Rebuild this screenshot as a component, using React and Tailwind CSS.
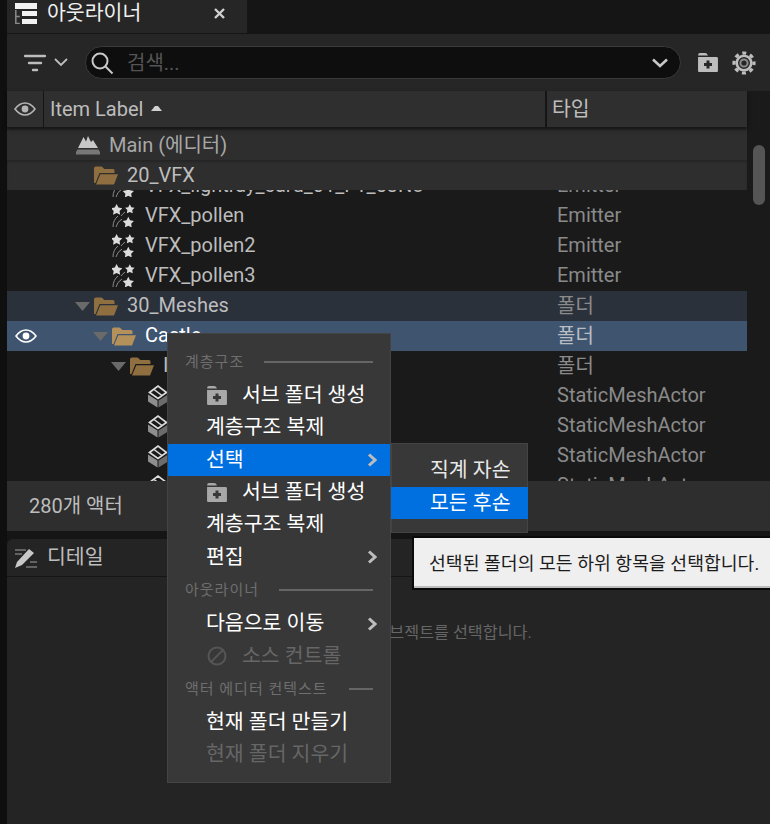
import React from "react";

const FONT = { fontFamily: '"Roboto","Noto Sans CJK KR",sans-serif' };

function starPath(cx, cy, r, inner) {
  let d = "";
  for (let i = 0; i < 10; i++) {
    const rad = i % 2 === 0 ? r : inner;
    const a = -Math.PI / 2 + (i * Math.PI) / 5;
    d += `${i === 0 ? "M" : "L"}${(cx + rad * Math.cos(a)).toFixed(2)} ${(cy + rad * Math.sin(a)).toFixed(2)}`;
  }
  return d + "Z";
}

function Eye({ color = "#b4b4b4" }) {
  return (
    <svg width="22" height="14" viewBox="0 0 22 14" fill="none">
      <path d="M1 7C4 3 7 1 11 1s7 2 10 6c-3 4-6 6-10 6S4 11 1 7Z" stroke={color} strokeWidth="1.6" />
      <circle cx="11" cy="7" r="3.4" fill={color} />
    </svg>
  );
}

function Folder({ color = "#8f6e40" }) {
  return (
    <svg width="24" height="19" viewBox="0 0 24 19" className="shrink-0">
      <path d="M0 17V2.2Q0 .5 2 .5h5q1 0 1.8.9L10.3 3H19q1.5 0 1.5 1.5V7H5.500L1.500 17Z" fill={color} />
      <path d="M2 18.5 6.300 8.200H24L20 18.500Z" fill={color} />
    </svg>
  );
}

function Arrow() {
  return (
    <svg width="15" height="9" viewBox="0 0 15 9" className="shrink-0">
      <path d="M0 0h15L7.500 9Z" fill="#6a6a6a" />
    </svg>
  );
}

function Stars() {
  return (
    <svg width="24" height="24" viewBox="0 0 24 24" className="shrink-0">
      <g fill="#dcdcdc">
        <path d={starPath(4.6, 7, 6, 3.1)} />
        <path d={starPath(17.8, 6.3, 5, 2.6)} />
        <path d={starPath(16.3, 19.7, 5.9, 3)} />
      </g>
      <g stroke="#8a8a8a" fill="none" strokeWidth="1">
        <path d="M1 24Q1 17 6 13" />
        <path d="M4 24Q5 19 10 16" />
        <path d="M9 13Q11 10.500 13 9" />
      </g>
    </svg>
  );
}

function Mesh() {
  return (
    <svg width="20" height="24" viewBox="0 0 20 24" className="shrink-0">
      <path d="M0 10.500v7l9.500 6v-7Z" fill="#8e8e8e" />
      <path d="M20 10.500v7l-9.500 6v-7Z" fill="#6c6c6c" />
      <path d="M1.500 8.500 10 2l8.500 6.500L10 14.500Z" fill="none" stroke="#dcdcdc" strokeWidth="1.700" />
      <path d="M6 5.500l8 6" stroke="#dcdcdc" strokeWidth="1.500" fill="none" />
    </svg>
  );
}

function FolderPlus({ color = "#bdbdbd", bg = "#262626", w = 22 }) {
  return (
    <svg width={w} height={w * 0.95} viewBox="0 0 22 21" className="shrink-0">
      <path d="M1 3.500Q1 1 3 1h5q2 0 3 2.500Z" fill={color} />
      <path d="M1 5h18.500Q21 5 21 6.500V19q0 1-1 1H2q-1 0-1-1Z" fill={color} />
      <path d="M9.500 8.500h3V11H15v3h-2.500v2.500h-3V14H7v-3h2.500Z" fill={bg} />
    </svg>
  );
}

function Gear() {
  return (
    <svg width="24" height="24" viewBox="0 0 24 24" fill="none">
      <circle cx="12" cy="12" r="10" stroke="#bdbdbd" strokeWidth="3.200" strokeDasharray="4 3.850" strokeDashoffset="2" />
      <circle cx="12" cy="12" r="7.300" stroke="#bdbdbd" strokeWidth="2.600" />
      <circle cx="12" cy="12" r="3.600" stroke="#8c8c8c" strokeWidth="2" />
    </svg>
  );
}

function Chevron({ color = "#bdbdbd" }) {
  return (
    <svg width="10" height="14" viewBox="0 0 10 14" fill="none">
      <path d="M2 1.500 8 7l-6 5.500" stroke={color} strokeWidth="3" />
    </svg>
  );
}

function Row({ indent, icon, label, type, className = "", textClass = "text-[#bdbdbd]", typeClass = "", eye, arrow }) {
  return (
    <div className={`relative flex h-[30px] shrink-0 items-center ${className}`}>
      <div className="flex w-[37px] shrink-0 justify-center">{eye && <Eye color="#ffffff" />}</div>
      <div className="flex w-[503px] shrink-0 items-center" style={{ paddingLeft: indent }}>
        {arrow && <span className="mr-[4px] flex"><Arrow /></span>}
        {icon}
        <span className={`ml-[9px] whitespace-nowrap text-[20px] ${textClass}`}>{label}</span>
      </div>
      <span className={`ml-[10px] whitespace-nowrap text-[20px] text-[#8a8a8a] ${typeClass}`}>{type}</span>
    </div>
  );
}

function MenuHeader({ label, line }) {
  return (
    <div className="flex h-[34px] items-center pl-[17px] pr-[17px]">
      <span className="whitespace-nowrap text-[15px] tracking-[1px] text-[#6e6e6e]">{label}</span>
      <div className="ml-auto h-[2px] bg-[#666666]" style={{ width: line }} />
    </div>
  );
}

function MenuItem({ label, icon, chevron, active, disabled }) {
  return (
    <div className={`flex h-[32.5px] items-center pl-[38px] pr-[13px] ${active ? "bg-[#0070e0]" : ""}`}>
      {icon && <span className="mr-[14px] flex w-[22px] justify-center">{icon}</span>}
      <span className={`whitespace-nowrap text-[20.5px] ${disabled ? "text-[#666666]" : "text-white"}`}>{label}</span>
      {chevron && <span className="ml-auto flex"><Chevron /></span>}
    </div>
  );
}

export default function App() {
  return (
    <div className="relative flex h-[824px] w-[770px] overflow-hidden bg-[#151515]" style={FONT}>
      <div className="w-[7px] shrink-0 bg-[#0f0f0f]" />
      <div className="flex min-w-0 flex-1 flex-col">
        {/* tab strip */}
        <div className="flex h-[34px] shrink-0 bg-[#151515]">
          <div className="flex h-[33px] w-[240px] items-center bg-[#262626] pb-[6px]">
            <svg width="22" height="21" viewBox="0 0 22 21" className="ml-[8px]">
              <path d="M0 0h22v6H0Z" fill="#f2f2f2" />
              <path d="M7 8h15v5H7ZM7 16h15v5H7Z" fill="#f2f2f2" />
              <path d="M.8 7v13.500h4M.8 13.500h4" stroke="#8a8a8a" strokeWidth="1.500" fill="none" />
            </svg>
            <span className="ml-[10px] text-[20.5px] text-[#f0f0f0]">아웃라이너</span>
            <svg width="11" height="11" viewBox="0 0 11 11" className="ml-auto mr-[22px]">
              <path d="M1 1l9 9M10 1l-9 9" stroke="#d0d0d0" strokeWidth="2.400" />
            </svg>
          </div>
        </div>
        {/* toolbar */}
        <div className="flex h-[57px] shrink-0 items-center bg-[#262626]">
          <svg width="22" height="18" viewBox="0 0 22 18" className="ml-[17px]">
            <path d="M1 2h20M5 9h12M9 16h4" stroke="#bdbdbd" strokeWidth="2.400" strokeLinecap="round" />
          </svg>
          <svg width="14" height="9" viewBox="0 0 14 9" fill="none" className="ml-[8px]">
            <path d="M1 1l6 6 6-6" stroke="#bdbdbd" strokeWidth="1.800" />
          </svg>
          <div className="ml-[17px] flex h-[33px] w-[596px] items-center rounded-full border border-[#3a3a3a] bg-[#0e0e0e]">
            <svg width="24" height="24" viewBox="0 0 24 24" fill="none" className="ml-[4px]">
              <circle cx="10" cy="10" r="7.500" stroke="#c8c8c8" strokeWidth="2" />
              <path d="m15.500 15.500 7 7" stroke="#c8c8c8" strokeWidth="2" />
            </svg>
            <span className="ml-[13px] text-[20px] text-[#555555]">검색...</span>
            <svg width="16" height="10" viewBox="0 0 16 10" fill="none" className="ml-auto mr-[12px]">
              <path d="M1 1.500 8 8l7-6.500" stroke="#c8c8c8" strokeWidth="2.600" />
            </svg>
          </div>
          <span className="ml-[16px] flex"><FolderPlus /></span>
          <span className="ml-[13px] flex"><Gear /></span>
        </div>
        {/* columns + tree */}
        <div className="flex h-[390px] shrink-0">
          <div className="flex w-[740px] shrink-0 flex-col">
            <div className="z-20 flex h-[36px] shrink-0 items-stretch bg-[#2f2f2f] shadow-[0_2px_4px_rgba(0,0,0,0.5)]">
              <div className="flex w-[37px] shrink-0 items-center justify-center border-r border-[#151515]">
                <Eye />
              </div>
              <div className="flex w-[503px] shrink-0 items-center border-r-2 border-[#151515] pl-[6px]">
                <span className="text-[20px] text-[#bdbdbd]">Item Label</span>
                <svg width="11" height="6" viewBox="0 0 11 6" className="ml-[8px] -mt-[2px]">
                  <path d="M0 6 4 1h3l4 5Z" fill="#d0d0d0" />
                </svg>
              </div>
              <div className="flex items-center pl-[5px] text-[20.5px] text-[#bdbdbd]">타입</div>
            </div>
            <div className="flex min-h-0 flex-1 flex-col overflow-hidden bg-[#1a1a1a]">
              <div className="z-10 flex h-[3px] shrink-0 bg-[#262626]" />
              <Row
                className="z-10 bg-[#2e2e2e]"
                indent="32px"
                icon={
                  <svg width="24" height="20" viewBox="0 0 24 20" className="shrink-0">
                    <path d="M2 13 7.500 2 10 6.500 12 1l3 6 2-2 5 8Z" fill="#c8c8c8" />
                    <path d="M0 19.500V17l1.500-2.500h21L24 17v2.500Z" fill="#777777" />
                  </svg>
                }
                label="Main (에디터)"
                textClass="text-[#a8a8a8]"
              />
              <Row
                className="z-10 bg-[#2e2e2e] shadow-[inset_0_2px_2px_rgba(0,0,0,0.2)]"
                indent="50px"
                icon={<Folder />}
                label="20_VFX"
                textClass="text-[#bdbdbd]"
              />
              <div className="-mt-[20px]">
                <Row indent="68px" icon={<Stars />} label="VFX_lightray_card_01_F1_53No" type="Emitter" />
              </div>
              <Row indent="68px" icon={<Stars />} label="VFX_pollen" type="Emitter" />
              <Row indent="68px" icon={<Stars />} label="VFX_pollen2" type="Emitter" />
              <Row indent="68px" icon={<Stars />} label="VFX_pollen3" type="Emitter" />
              <div className="h-[1px] shrink-0 bg-[#1a1a1a]" />
              <Row className="bg-[#2a313b]" indent="31px" arrow icon={<Folder />} label="30_Meshes" textClass="pb-[2px] text-[#bdbdbd]" type="폴더" />
              <Row
                className="bg-[#3f556f]"
                indent="49px"
                arrow
                eye
                icon={<Folder color="#b4915a" />}
                label="Castle"
                textClass="pb-[2px] text-white"
                type={<span className="text-[#b8bec6]">폴더</span>}
              />
              <Row indent="67px" arrow icon={<Folder />} label="Interior" textClass="pb-[2px] text-[#bdbdbd]" type="폴더" />
              <Row indent="104px" icon={<Mesh />} label="" type="StaticMeshActor" typeClass="pb-[2px]" />
              <Row indent="104px" icon={<Mesh />} label="" type="StaticMeshActor" typeClass="pb-[2px]" />
              <Row indent="104px" icon={<Mesh />} label="" type="StaticMeshActor" typeClass="pb-[2px]" />
              <Row indent="104px" icon={<Mesh />} label="" type="StaticMeshActor" typeClass="pb-[2px]" />
            </div>
          </div>
          <div className="flex flex-1 justify-center bg-[#1a1a1a] pt-[54px]">
            <div className="h-[60px] w-[12px] rounded-full bg-[#555555]" />
          </div>
        </div>
        {/* status bar */}
        <div className="flex h-[50px] shrink-0 items-center bg-[#2e2e2e] pl-[22px] text-[20px] text-[#bdbdbd]">280개 액터</div>
        <div className="h-[8px] shrink-0 bg-[#151515]" />
        {/* details */}
        <div className="flex min-h-0 flex-1 flex-col rounded-t-[6px] bg-[#242424]">
          <div className="flex h-[38px] shrink-0 items-center border-b border-[#151515] pl-[7px]">
            <svg width="24" height="22" viewBox="0 0 24 22" className="shrink-0">
              <path d="M1 21l2-6L15 2l5 4L8 18Z" fill="#c8c8c8" />
              <path d="M1 3h11M1 7h7M12 20h11M16 15h7" stroke="#777777" strokeWidth="1.500" />
            </svg>
            <span className="ml-[9px] text-[20.5px] text-[#bdbdbd]">디테일</span>
          </div>
          <div className="flex flex-1 justify-center pt-[44px]">
            <span className="-ml-[2px] whitespace-nowrap text-[16.2px] text-[#666666]">세부 정보를 보려면 오브젝트를 선택합니다.</span>
          </div>
        </div>
      </div>

      {/* context menu */}
      <div className="absolute left-[167px] top-[333px] z-30 flex h-[450px] w-[224px] flex-col border border-[#444444] bg-[#383838] py-[11px]">
        <MenuHeader label="계층구조" line="109px" />
        <MenuItem label="서브 폴더 생성" icon={<FolderPlus color="#a8a8a8" bg="#383838" />} />
        <MenuItem label="계층구조 복제" />
        <MenuItem label="선택" chevron active />
        <MenuItem label="서브 폴더 생성" icon={<FolderPlus color="#a8a8a8" bg="#383838" />} />
        <MenuItem label="계층구조 복제" />
        <MenuItem label="편집" chevron />
        <MenuHeader label="아웃라이너" line="94px" />
        <MenuItem label="다음으로 이동" chevron />
        <MenuItem
          label="소스 컨트롤"
          disabled
          icon={
            <svg width="20" height="20" viewBox="0 0 20 20" fill="none">
              <circle cx="10" cy="10" r="8.500" stroke="#555555" strokeWidth="2" />
              <path d="M4 16 16 4" stroke="#555555" strokeWidth="2" />
            </svg>
          }
        />
        <MenuHeader label="액터 에디터 컨텍스트" line="24px" />
        <MenuItem label="현재 폴더 만들기" />
        <MenuItem label="현재 폴더 지우기" disabled />
      </div>

      {/* submenu */}
      <div className="absolute left-[391px] top-[443px] z-30 flex h-[90px] w-[137px] flex-col border border-[#444444] bg-[#383838] pt-[10px]">
        <div className="flex h-[33px] items-center pl-[38px] text-[20.5px] text-[#e8e8e8]">직계 자손</div>
        <div className="-mx-[1px] flex h-[32px] items-center bg-[#0070e0] pl-[39px] text-[20.5px] text-white">모든 후손</div>
      </div>

      {/* tooltip */}
      <div className="absolute left-[412px] top-[536px] z-40 flex h-[54px] w-[370px] items-center border-2 border-[#0a0a0a] bg-[#efefef] pl-[15px] pt-[2px] shadow-[inset_0_-2px_0_#bdbdbd]">
        <span className="whitespace-nowrap text-[18.3px] text-[#1c1c1c]">선택된 폴더의 모든 하위 항목을 선택합니다.</span>
      </div>
    </div>
  );
}
